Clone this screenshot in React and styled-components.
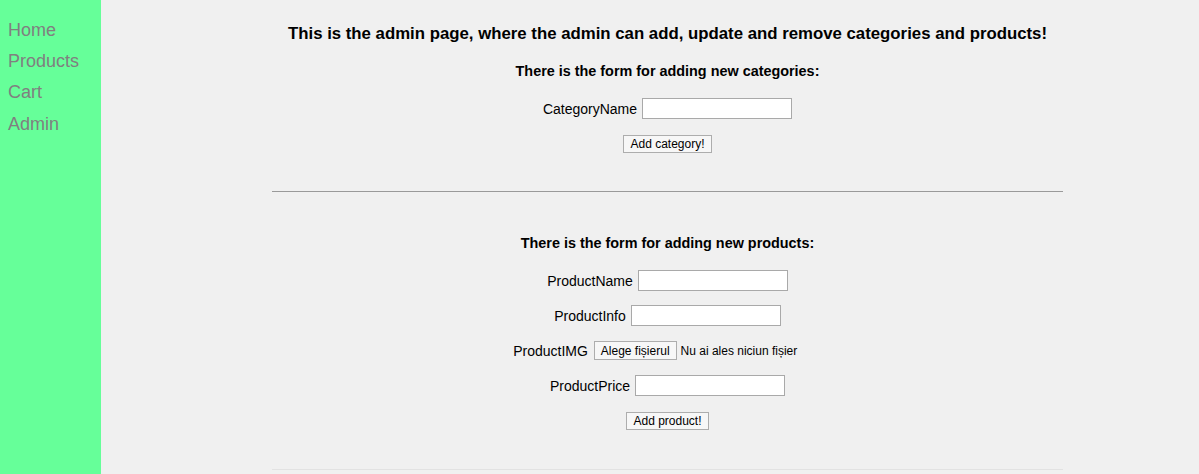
import React from 'react';
import styled, { createGlobalStyle } from 'styled-components';

const GlobalStyle = createGlobalStyle`
  html, body {
    margin: 0;
    padding: 0;
    background: #f0f0f0;
    font-family: "Liberation Sans", Arial, sans-serif;
    color: #000;
  }
`;

const Page = styled.div`
  display: flex;
  min-height: 474px;
  height: 474px;
  overflow: hidden;
`;

const Sidebar = styled.nav`
  width: 101px;
  flex-shrink: 0;
  background: #66ff99;
  display: flex;
  flex-direction: column;
  gap: 10.2px;
  padding: 20px 0 0 8px;
  box-sizing: border-box;
`;

const NavLink = styled.a`
  color: #808080;
  font-size: 18px;
  line-height: 21px;
  text-decoration: none;
  cursor: pointer;
`;

const Main = styled.main`
  flex: 1;
  padding-left: 35px;
`;

const Column = styled.div`
  width: 791px;
  margin: 0 auto;
  display: flex;
  flex-direction: column;
  align-items: center;
`;

const Title = styled.h1`
  margin: 24px 0 0;
  font-size: 16.8px;
  line-height: 20px;
  font-weight: bold;
  text-align: center;
`;

const Section = styled.form`
  display: flex;
  flex-direction: column;
  align-items: center;
  gap: 14px;
  margin-top: ${p => p.top}px;
`;

const SubTitle = styled.h3`
  margin: 0 0 4px;
  font-size: 14.4px;
  line-height: 18px;
  font-weight: bold;
`;

const Row = styled.div`
  display: flex;
  align-items: center;
  justify-content: center;
  gap: ${p => (p.tight ? 6 : 5)}px;
  height: 21px;
  font-size: 14px;
`;

const Label = styled.label`
  font-size: 14px;
`;

const Input = styled.input`
  width: 150px;
  height: 21px;
  box-sizing: border-box;
  border: 1px solid #a9a9a9;
  background: #fff;
  padding: 1px 2px;
  font-family: inherit;
`;

const FilePicker = styled.div`
  width: 228px;
  display: flex;
  align-items: center;
  gap: 4px;
`;

const Button = styled.button`
  height: ${p => (p.tall ? 19 : 18)}px;
  padding: 0 6px;
  box-sizing: border-box;
  border: 1px solid #adadad;
  background: #f7f7f7;
  font-family: inherit;
  font-size: 12px;
  line-height: 16px;
  color: #000;
`;

const FileText = styled.span`
  font-size: 12px;
  white-space: nowrap;
`;

const Divider = styled.hr`
  width: 791px;
  margin: ${p => p.top}px 0 0;
  border: none;
  border-top: 1px solid ${p => p.color};
`;

export default function App() {
  return (
    <>
      <GlobalStyle />
      <Page>
        <Sidebar>
          <NavLink>Home</NavLink>
          <NavLink>Products</NavLink>
          <NavLink>Cart</NavLink>
          <NavLink>Admin</NavLink>
        </Sidebar>
        <Main>
          <Column>
            <Title>
              This is the admin page, where the admin can add, update and remove categories and products!
            </Title>
            <Section top={18}>
              <SubTitle>There is the form for adding new categories:</SubTitle>
              <Row>
                <Label>CategoryName</Label>
                <Input type="text" />
              </Row>
              <Row>
                <Button type="button">Add category!</Button>
              </Row>
            </Section>
            <Divider top={37} color="#9a9a9a" />
            <Section top={42}>
              <SubTitle>There is the form for adding new products:</SubTitle>
              <Row>
                <Label>ProductName</Label>
                <Input type="text" />
              </Row>
              <Row>
                <Label>ProductInfo</Label>
                <Input type="text" />
              </Row>
              <Row tight>
                <Label>ProductIMG</Label>
                <FilePicker>
                  <Button type="button" tall>Alege fișierul</Button>
                  <FileText>Nu ai ales niciun fișier</FileText>
                </FilePicker>
              </Row>
              <Row>
                <Label>ProductPrice</Label>
                <Input type="text" />
              </Row>
              <Row>
                <Button type="button">Add product!</Button>
              </Row>
            </Section>
            <Divider top={38} color="#e2e2e2" />
          </Column>
        </Main>
      </Page>
    </>
  );
}
